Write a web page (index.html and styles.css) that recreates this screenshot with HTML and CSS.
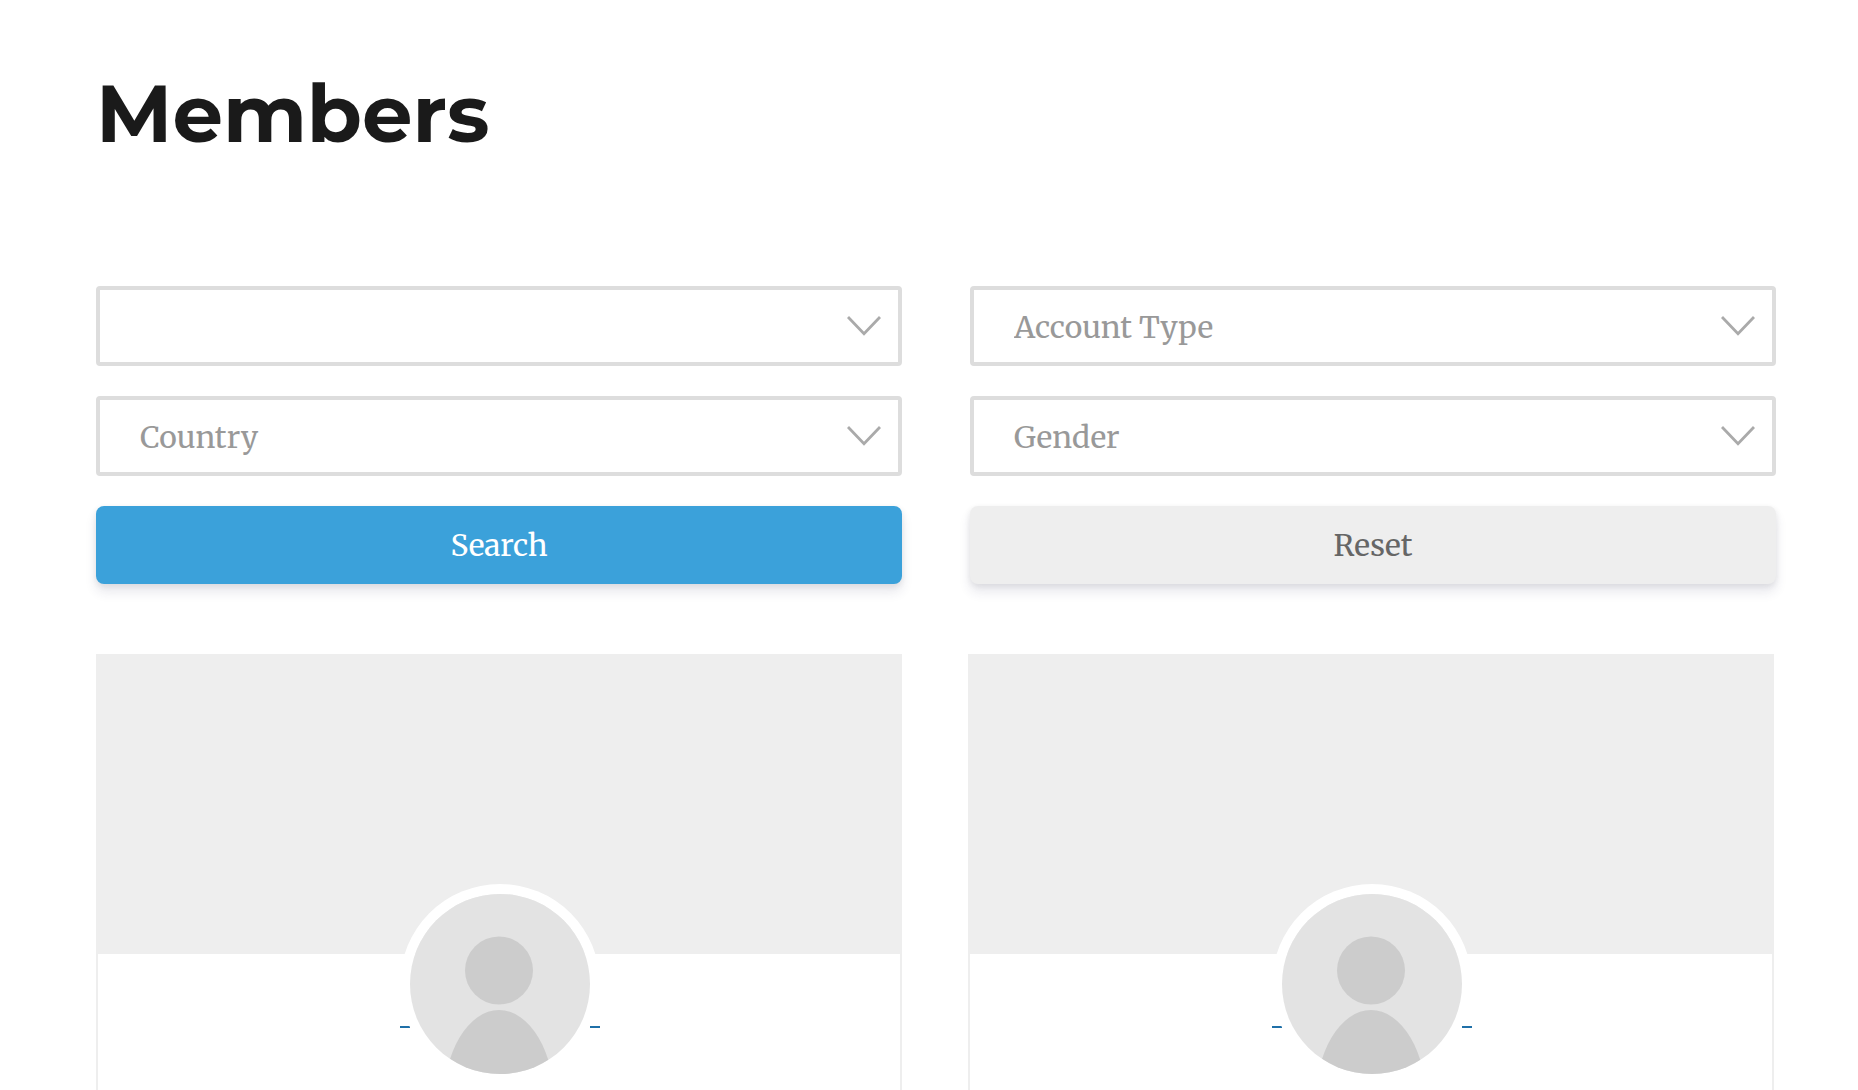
FILE: index.html
```html
<!DOCTYPE html>
<html lang="en">
<head>
<meta charset="utf-8">
<meta name="viewport" content="width=device-width, initial-scale=1">
<title>Members</title>
<link rel="stylesheet" href="styles.css">
</head>
<body>
<svg class="sprite" aria-hidden="true">
  <symbol id="chevron" viewBox="0 0 34 20"><path d="M1 1 17 17.7 33 1" fill="none" stroke="currentColor" stroke-width="2.8"/></symbol>
  <symbol id="person" viewBox="0 0 180 180"><rect width="180" height="180" fill="#e3e3e3"/><circle cx="89" cy="76.5" r="34" fill="#ccc"/><ellipse cx="89" cy="211" rx="56" ry="95" fill="#ccc"/></symbol>
</svg>
<main class="page">
  <h1 class="title">Members</h1>
  <form class="filters">
    <div class="field">
      <select class="select" aria-label="Filter"><option></option></select>
      <svg class="chevron" aria-hidden="true"><use href="#chevron"/></svg>
    </div>
    <div class="field">
      <select class="select" aria-label="Account Type"><option>Account Type</option></select>
      <svg class="chevron" aria-hidden="true"><use href="#chevron"/></svg>
    </div>
    <div class="field">
      <select class="select" aria-label="Country"><option>Country</option></select>
      <svg class="chevron" aria-hidden="true"><use href="#chevron"/></svg>
    </div>
    <div class="field">
      <select class="select" aria-label="Gender"><option>Gender</option></select>
      <svg class="chevron" aria-hidden="true"><use href="#chevron"/></svg>
    </div>
    <button class="button button-primary" type="submit">Search</button>
    <button class="button" type="reset">Reset</button>
  </form>
  <section class="members">
    <article class="member">
      <div class="cover"></div>
      <a class="photo" href="#" aria-label="View profile"><svg class="avatar" aria-hidden="true"><use href="#person"/></svg></a>
    </article>
    <article class="member">
      <div class="cover"></div>
      <a class="photo" href="#" aria-label="View profile"><svg class="avatar" aria-hidden="true"><use href="#person"/></svg></a>
    </article>
  </section>
</main>
</body>
</html>
```
FILE: styles.css
```css
* { box-sizing: border-box; }

body {
  margin: 0;
  background: #fff;
  color: #1a1a1a;
  font-family: Merriweather, "Noto Serif", "DejaVu Serif Condensed", "DejaVu Serif", serif;
  font-size: 30px;
}

.sprite { position: absolute; width: 0; height: 0; }

.page { padding: 64px 82px 0 96px; }

.title {
  margin: 0 0 122px;
  font-family: Montserrat, Inter, sans-serif;
  font-size: 80px;
  font-weight: 700;
  line-height: 100px;
}

.filters {
  display: grid;
  grid-template-columns: 1fr 1fr;
  gap: 30px 68px;
}

.field { position: relative; }

.select {
  display: block;
  width: 100%;
  height: 80px;
  padding: 2px 64px 0 40px;
  border: 4px solid #ddd;
  border-radius: 4px;
  appearance: none;
  background: #fff;
  color: #999;
  font: inherit;
}

.chevron {
  position: absolute;
  top: 30px;
  right: 21px;
  width: 34px;
  height: 20px;
  color: #aaa;
  pointer-events: none;
}

.button {
  height: 78px;
  padding: 0;
  border: 0;
  border-radius: 8px;
  background: #eee;
  box-shadow: 0 8px 12px rgba(50, 50, 93, .11), 0 2px 6px rgba(0, 0, 0, .08);
  color: #666;
  font: inherit;
}

.button-primary { background: #3ba1da; color: #fff; }

.members {
  display: grid;
  grid-template-columns: 1fr 1fr;
  gap: 66px;
  margin: 70px 2px 0 0;
}

.member {
  height: 600px;
  border: 2px solid #eee;
}

.cover { height: 298px; background: #eee; }

.photo {
  display: flex;
  justify-content: center;
  align-items: flex-end;
  margin-top: -60px;
  padding-left: 2px;
}

.photo::before,
.photo::after {
  content: "";
  width: 10px;
  height: 2px;
  margin-bottom: 46px;
  background: #1f70a8;
}

.avatar {
  width: 180px;
  height: 180px;
  border-radius: 50%;
  box-shadow: 0 0 0 10px #fff;
}
```
